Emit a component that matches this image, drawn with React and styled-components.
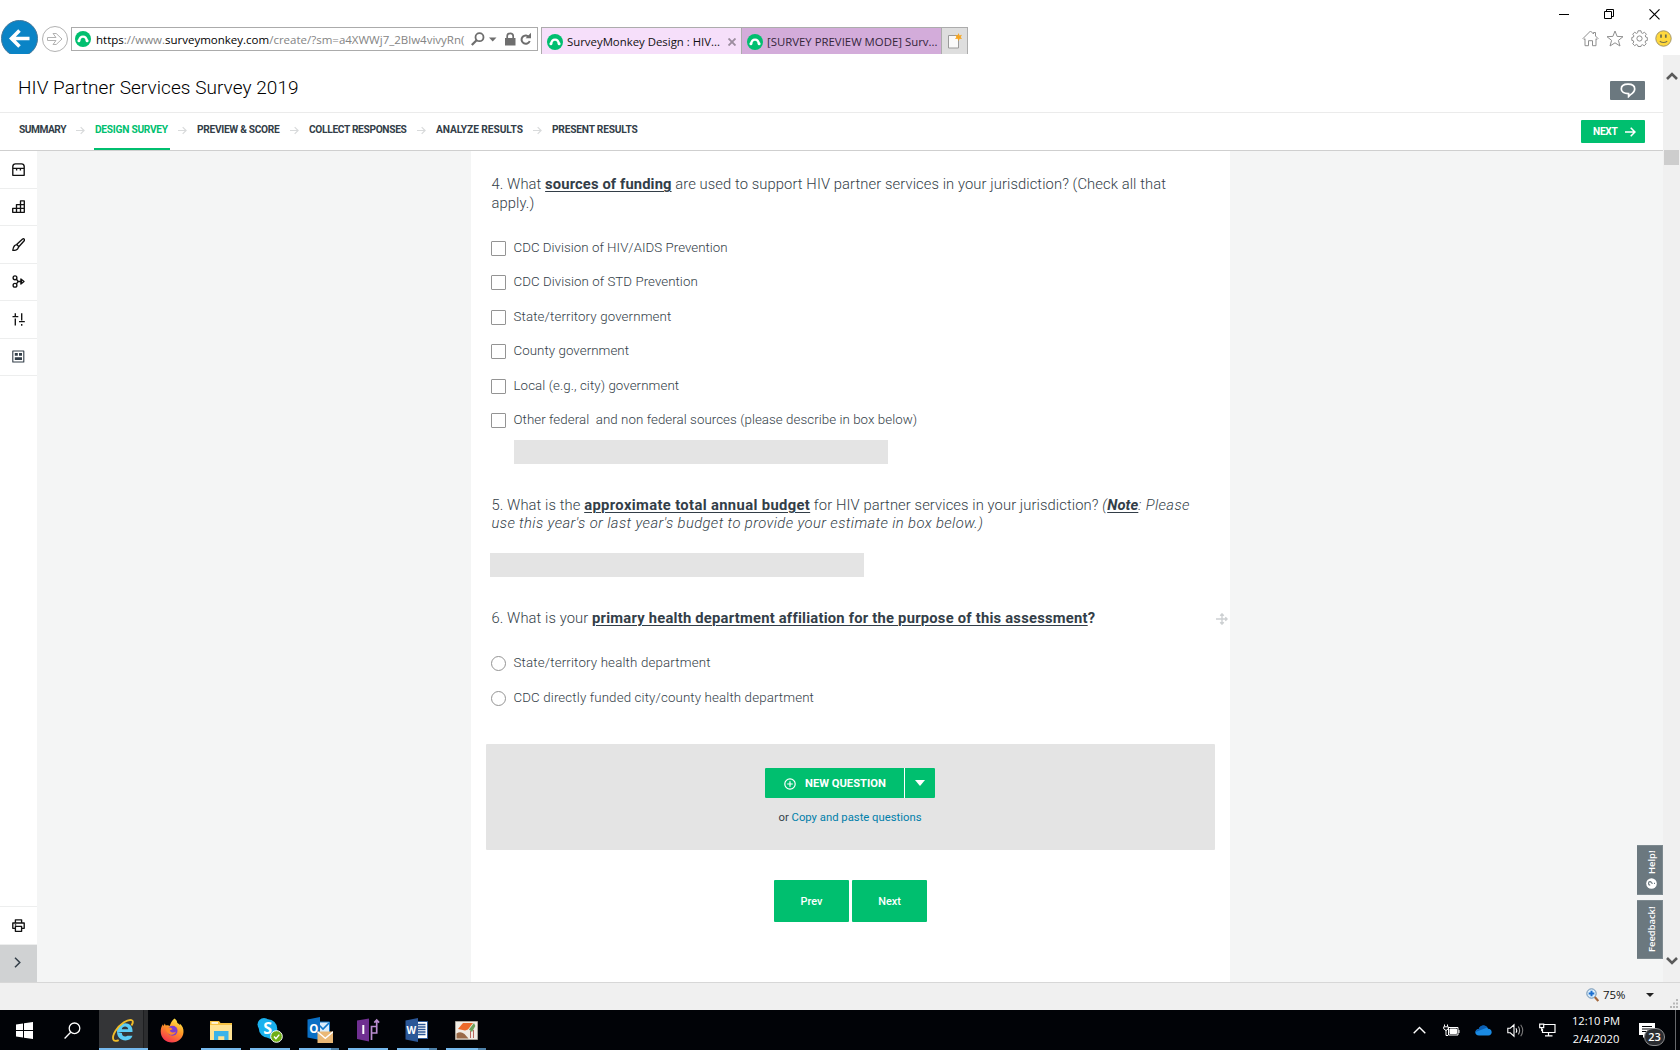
import React from "react";
import styled, { createGlobalStyle, css } from "styled-components";

const ui = `"Open Sans", "Noto Sans", sans-serif`;
const brand = `Roboto, "Liberation Sans", sans-serif`;
const green = "#00bf6f";
const ink = "#333e48";
const slate = "#6b787f";

const Global = createGlobalStyle`
  *, *::before, *::after { box-sizing: border-box; }
  html, body { margin: 0; padding: 0; }
  body { width: 1680px; height: 1050px; overflow: hidden; background: #fff; }
  svg { display: block; flex: none; }
`;

const Screen = styled.div`
  width: 1680px;
  height: 1050px;
  display: flex;
  flex-direction: column;
  background: #fff;
  overflow: hidden;
  font-family: ${brand};
`;

/* ---------- browser chrome ---------- */

const TitleBar = styled.div`
  height: 20px;
  display: flex;
  justify-content: flex-end;
  align-items: flex-end;
  gap: 34px;
  padding: 0 20px 0 0;
`;

const BrowserBar = styled.div`
  height: 34px;
  display: flex;
  align-items: flex-start;
  padding-left: 1px;
  font-family: ${ui};
  overflow: hidden;
`;

const BackButton = styled.div`
  width: 37px;
  height: 37px;
  border-radius: 50%;
  background: #0a84c6;
  border: 1px solid #47799a;
  display: grid;
  place-items: center;
  flex: none;
`;

const ForwardButton = styled.div`
  width: 26px;
  height: 26px;
  margin: 6px 0 0 4px;
  border: 1px solid #b2b2b2;
  border-radius: 50%;
  display: grid;
  place-items: center;
  flex: none;
`;

const AddressBar = styled.div`
  width: 467px;
  height: 24px;
  margin: 7px 0 0 3px;
  padding: 0 5px 0 3px;
  border: 1px solid #ababab;
  display: flex;
  align-items: center;
  flex: none;
`;

const Url = styled.div`
  width: 372px;
  flex: none;
  margin: 0 3px 0 5px;
  font-size: 11.5px;
  line-height: 20px;
  padding-top: 1px;
  white-space: nowrap;
  color: #848484;
  b { font-weight: 400; color: #000; }
`;

const TabStrip = styled.div`
  display: flex;
  margin: 7px 0 0 3px;
  height: 27px;
  border: 1px solid #acacac;
  border-bottom: 0;
`;

const Tab = styled.div`
  width: 200px;
  display: flex;
  align-items: center;
  gap: 4px;
  padding: 1px 0 0 5px;
  font-size: 11.38px;
  white-space: nowrap;
  border-right: 1px solid #acacac;
  background: ${(p) => (p.$active ? "#f6dffa" : "#d3acda")};
  color: ${(p) => (p.$active ? "#111" : "#33263a")};
`;

const TabTitle = styled.span`
  width: ${(p) => p.$w}px;
`;

const NewTab = styled.div`
  width: 25px;
  display: grid;
  place-items: center;
  background: #dedede;
`;

const BrowserTools = styled.div`
  margin-left: auto;
  margin-top: 10px;
  padding-right: 8px;
  display: flex;
  gap: 7px;
`;

/* ---------- page ---------- */

const Viewport = styled.div`
  height: 928px;
  display: flex;
`;

const Page = styled.div`
  position: relative;
  width: 1663px;
  display: flex;
  flex-direction: column;
`;

const ScrollBar = styled.div`
  width: 17px;
  margin-top: 1px;
  background: #f0f0f0;
  display: flex;
  flex-direction: column;
  align-items: center;
  padding: 16px 0 16px;
`;

const Thumb = styled.div`
  width: 15px;
  height: 15px;
  margin: 69px 0 auto;
  background: #cdcdcd;
`;

const SurveyHeader = styled.header`
  height: 59px;
  padding: 0 18px;
  border-bottom: 1px solid #ebebeb;
  display: flex;
  align-items: flex-start;
  justify-content: space-between;
`;

const SurveyTitle = styled.h1`
  margin: 22px 0 0;
  font-size: 19px;
  line-height: 24px;
  font-weight: 300;
  letter-spacing: 0.06px;
  color: #000;
`;

const CommentButton = styled.div`
  width: 35px;
  height: 19px;
  margin-top: 27px;
  border-radius: 1px;
  background: ${slate};
  display: grid;
  place-items: center;
`;

const Steps = styled.nav`
  height: 38px;
  padding: 0 18px 0 19px;
  border-bottom: 1px solid #cfcfcf;
  display: flex;
  align-items: stretch;
`;

const Step = styled.div`
  position: relative;
  width: ${(p) => p.$w}px;
  padding-top: 8px;
  font-size: 10.2px;
  line-height: 17px;
  font-weight: 700;
  white-space: nowrap;
  letter-spacing: ${(p) => p.$track}px;
  color: ${ink};
  ${(p) => p.$active && css`
    color: ${green};
    &::after {
      content: "";
      position: absolute;
      left: -1px;
      right: -2px;
      bottom: 0;
      height: 2px;
      background: ${green};
    }
  `}
`;

const StepArrow = styled.div`
  width: 9px;
  margin: 13px 10px 0;
`;

const NextStep = styled.div`
  width: 64px;
  height: 23px;
  margin: 7px 0 0 auto;
  padding: 0 9px 0 12px;
  border-radius: 1px;
  background: ${green};
  color: #fff;
  display: flex;
  align-items: center;
  justify-content: space-between;
  font-size: 10.2px;
  font-weight: 700;
  letter-spacing: -0.3px;
`;

const Workspace = styled.div`
  flex: 1;
  display: flex;
  background: #f4f5f5;
  overflow: hidden;
`;

const Sidebar = styled.aside`
  width: 37px;
  background: #fff;
  display: flex;
  flex-direction: column;
`;

const SideItem = styled.div`
  height: 37.5px;
  border-bottom: 1px solid #edeeee;
  display: grid;
  place-items: center;
  color: #111;
`;

const SideBottom = styled.div`
  margin-top: auto;
  border-top: 1px solid #edeeee;
`;

const Expand = styled.div`
  width: 37px;
  height: 37.5px;
  background: #d0d2d3;
  display: grid;
  place-items: center;
  padding: 0 2px 2px 0;
`;

const Paper = styled.main`
  width: 759px;
  margin-left: 434px;
  background: #fff;
  padding: 24px 15px 0;
  color: ${ink};
`;

const Question = styled.section`
  padding: 0 5px;
  margin-bottom: ${(p) => p.$after}px;
`;

const Prompt = styled.div`
  font-size: 14.75px;
  line-height: ${(p) => p.$line || 19}px;
  font-weight: 350;
  letter-spacing: 0.09px;
  padding-left: 0.5px;
  white-space: nowrap;
  margin-bottom: ${(p) => p.$after}px;
  display: flex;
  justify-content: space-between;
`;

const Note = styled.em`
  letter-spacing: 0.39px;
`;

const DragHandle = styled.span`
  margin: 4px -18px 0 0;
`;

const Strong = styled.strong`
  font-weight: 700;
  letter-spacing: ${(p) => p.$track}px;
  text-decoration: ${(p) => (p.$plain ? "none" : "underline")};
  text-decoration-thickness: 1px;
  text-underline-offset: 2px;
`;

const Option = styled.label`
  height: ${(p) => p.$h || 34.5}px;
  display: flex;
  align-items: center;
  gap: 7.5px;
`;

const Mark = styled.span`
  width: 15px;
  height: 15px;
  border: 1px solid #949494;
  border-radius: ${(p) => (p.$round ? "50%" : "1px")};
  background: #fff;
`;

const OptionText = styled.span`
  font-size: 13.3px;
  line-height: 17px;
  font-weight: 350;
  letter-spacing: ${(p) => p.$track}px;
  white-space: pre;
  padding-bottom: 2px;
`;

const AnswerBox = styled.div`
  width: 374px;
  height: 24px;
  margin: 2px 0 0 ${(p) => p.$left}px;
  background: #e4e4e4;
`;

const AddPanel = styled.div`
  height: 105.5px;
  margin-bottom: 30.5px;
  padding: 24px 1px 0 0;
  border-radius: 1px;
  background: #e4e4e4;
  display: flex;
  flex-direction: column;
  align-items: center;
  font-size: 11.3px;
  line-height: 14px;
`;

const SplitButton = styled.div`
  display: flex;
  gap: 1px;
  height: 30px;
  margin-bottom: 13px;
  border-radius: 1px;
  background: #fff;
  overflow: hidden;
`;

const NewQuestion = styled.div`
  width: 139px;
  padding: 1px 0 0 19px;
  background: ${green};
  color: #fff;
  display: flex;
  align-items: center;
  gap: 9px;
  font-size: 11.2px;
  font-weight: 700;
  white-space: nowrap;
`;

const MoreTypes = styled.div`
  width: 30px;
  background: ${green};
  display: grid;
  place-items: center;
`;

const PasteLink = styled.a`
  color: #007faa;
`;

const Pager = styled.div`
  display: flex;
  justify-content: center;
  gap: 3px;
`;

const PageButton = styled.div`
  width: 75px;
  height: 42px;
  border-radius: 1px;
  background: ${green};
  color: #fff;
  display: grid;
  place-items: center;
  font-size: 10.9px;
  font-weight: 500;
`;

const SideTabs = styled.div`
  position: absolute;
  right: 0;
  top: 791px;
  display: flex;
  flex-direction: column;
  gap: 5px;
`;

const SideTab = styled.div`
  width: 26px;
  height: ${(p) => p.$h}px;
  background: ${slate};
  border: 1px solid #7d898f;
  border-right: 0;
  color: #fff;
  display: flex;
  align-items: center;
  justify-content: center;
  gap: 4px;
  writing-mode: vertical-rl;
  transform: rotate(180deg);
  font-family: ${ui};
  font-size: 9.4px;
  font-weight: 600;
  padding-right: 4px;
  line-height: 14px;
`;

/* ---------- status bar and taskbar ---------- */

const StatusBar = styled.div`
  height: 28px;
  padding-bottom: 4px;
  background: #f0f0f0;
  border-top: 1px solid #d7d7d7;
  display: flex;
  justify-content: flex-end;
  align-items: center;
  font-family: ${ui};
  font-size: 11.4px;
  color: #111;
`;

const Zoom = styled.span`
  width: 43px;
  margin: -1px 0 0 4px;
`;

const Grip = styled.span`
  margin-bottom: -4px;
`;

const Taskbar = styled.div`
  height: 40px;
  background: #010307;
  display: flex;
  align-items: stretch;
`;

const TaskItem = styled.div`
  width: ${(p) => p.$w || 49}px;
  padding: ${(p) => p.$pad || "0"};
  display: flex;
  align-items: center;
  justify-content: center;
`;

const AppButton = styled.div`
  position: relative;
  width: 49px;
  padding-left: ${(p) => p.$nudge || 0}px;
  padding-right: 1px;
  display: flex;
  align-items: center;
  justify-content: center;
  background: ${(p) => (p.$active ? "linear-gradient(90deg, #343537 44px, #1d1e20 44px, #1d1e20 45px, #2c2d2f 45px)" : "transparent")};
  &::after {
    content: "";
    position: absolute;
    left: ${(p) => (p.$active ? 0 : 4)}px;
    right: ${(p) => (p.$active ? 0 : 5)}px;
    bottom: 0;
    height: ${(p) => (p.$open ? 2 : 0)}px;
    background: ${(p) => (p.$multi ? "linear-gradient(90deg, #76b9ed calc(100% - 8px), #4f82a9 calc(100% - 8px))" : "#76b9ed")};
  }
`;

const Tray = styled.div`
  margin-left: auto;
  display: flex;
  align-items: center;
  color: #fff;
`;

const TrayIcon = styled.div`
  width: 32px;
  display: grid;
  place-items: center;
`;

const Clock = styled.div`
  width: 66px;
  text-align: center;
  font-family: ${ui};
  font-size: 11.2px;
  line-height: 18px;
  padding-bottom: 1px;
`;

const ActionCenter = styled.div`
  position: relative;
  width: 46px;
  height: 40px;
  padding: 13px 0 0 10px;
`;

const Badge = styled.div`
  position: absolute;
  left: 15px;
  top: 18px;
  width: 21px;
  height: 18px;
  border-radius: 9px;
  border: 1px solid #8b8c8e;
  background: #2b2d31;
  color: #fff;
  font: 600 11px/16px ${ui};
  text-align: center;
`;

const ShowDesktop = styled.div`
  width: 5px;
  height: 40px;
  border-left: 1px solid #66686b;
`;

/* ---------- drawings ---------- */

const Monkey = () => (
  <svg width="16" height="16" viewBox="0 0 16 16">
    <circle cx="8" cy="8" r="8" fill="#00bf6f" />
    <path d="M4.200 9.600C4.600 6.900 5.900 5.700 8 5.700s3.400 1.200 3.800 3.900" fill="none" stroke="#fff" strokeWidth="2.300" />
    <circle cx="3.900" cy="9.800" r="1.500" fill="#fff" />
    <circle cx="12.100" cy="9.800" r="1.500" fill="#fff" />
  </svg>
);

const ThinArrow = ({ w = 9, h = 9, color = "#d8dadb", sw = 1.3 }) => (
  <svg width={w} height={h} viewBox="0 0 10 9" fill="none" stroke={color} strokeWidth={sw}>
    <path d="M0 4.5h9M5.2.7 9 4.5 5.2 8.3" />
  </svg>
);

const Chevron = ({ down }) => (
  <svg width="12" height="10" viewBox="0 0 12 10" fill="none" stroke="#5a5a5a" strokeWidth="2.6">
    <path d={down ? "M1 2l5 5 5-5" : "M1 8l5-5 5 5"} />
  </svg>
);

const Caret = ({ w, h, color }) => (
  <svg width={w} height={h} viewBox="0 0 10 6" preserveAspectRatio="none"><path d="M0 0h10L5 6z" fill={color} /></svg>
);

const SideIcon = ({ name }) => {
  const art = {
    bank: <path d="M.8 12.3V3.4Q1 .8 3.4.8h6.2q2.4 0 2.6 2.6v8.9zM.8 5.3h11.4M4.6 5.5v2M8.4 5.5v2" />,
    blocks: <path d="M.7 12.3V8.4h3.8V4.6h4V.8h3.8v11.5zM4.5 12.3V8.4h7.8M8.5 12.3V4.6h3.8" />,
    brush: <path d="M4.6 6.6 10.6 1q1-.6 1.6.2.6.8 0 1.6L6.8 8.8M4.8 6.6 6.9 8.7 5.6 10.9Q3.6 12.8.8 12.3q.2-2.8 1.7-4.6.9-1 2.3-1.1z" />,
    logic: <><circle cx="3" cy="2.8" r="1.9" /><circle cx="3" cy="10.2" r="1.9" /><path d="M4.4 4.3 6.2 6.5 4.4 8.8M6 6.5h4M8.9 3.9 12 6.5 8.9 9.1z" /></>,
    options: <path d="M3.3.3v3.2M.5 3.6h5.8M3.3 5.6v7M9.7.3v7.2M7 8.600h5.8M9.7 11v1.8" />,
    format: <><rect x=".8" y="1" width="11" height="11" strokeWidth="1.100" /><path d="M2.800 3h3v2.700h-3zM7 3h3v2.700H7zM2.800 7.300H10V10H2.800z" fill="#333e48" stroke="none" /></>,
    print: <path d="M3.4 4V.8h6.2V4M3.2 9.3H.8V4h11.4v5.3H9.8M3.4 7.4h6.2v4.9H3.4zM2.8 5.8h1.4" />,
  };
  return (
    <svg width="13" height="13" viewBox="0 0 13 13" fill="none" stroke={name === "format" ? "#333e48" : "#111"} strokeWidth="1.35" strokeLinejoin="round">
      {art[name]}
    </svg>
  );
};

const WindowControls = () => (
  <>
    <svg width="11" height="12" viewBox="0 0 11 12"><path d="M0 6.5h10" stroke="#000" /></svg>
    <svg width="11" height="12" viewBox="0 0 11 12" fill="none" stroke="#000"><path d="M.5 3.5h7v7h-7zM2.5 3.5v-2h7v7h-2" /></svg>
    <svg width="11" height="12" viewBox="0 0 11 12" fill="none" stroke="#000" strokeWidth="1.2"><path d="M.5 1.3l10 10M10.5 1.3l-10 10" /></svg>
  </>
);

const HomeIcon = () => (
  <svg width="17" height="17" viewBox="0 0 17 17" fill="none" stroke="#8f8f8f">
    <path d="M1 8.5 8.5 1l3 3V2.5h2V6l2.5 2.5-1 1-1-.8v7h-3.500v-5h-4v5H3v-7l-1 .8z" />
  </svg>
);
const StarIcon = () => (
  <svg width="18" height="17" viewBox="0 0 18 17" fill="none" stroke="#8f8f8f">
    <path d="M9 1l2.100 5.400 5.900.3-4.600 3.700 1.600 5.600L9 12.800 4 16l1.600-5.600L1 6.700l5.900-.3z" />
  </svg>
);
const GearIcon = () => (
  <svg width="17" height="17" viewBox="0 0 17 17" fill="none" stroke="#8f8f8f" strokeLinejoin="round">
    <path d="M7 .8h3l.4 2 1.300.6 1.700-1.200 2 2-1.200 1.700.6 1.200 1.500.4v3l-1.700.3-.5 1.300 1.100 1.700-2 2-1.600-1.100-1.300.5-.3 1.300H7l-.4-1.500-1.300-.5-1.600 1.200-2-2 1.100-1.700-.5-1.300-1.500-.3v-2.900l1.600-.4.500-1.200-1.200-1.700 2-2 1.700 1.200 1.200-.6z" />
    <circle cx="8.5" cy="8.5" r="2.6" />
  </svg>
);
const SmileIcon = () => (
  <svg width="17" height="17" viewBox="0 0 17 17">
    <circle cx="8.5" cy="8.5" r="7.7" fill="#ffd83d" stroke="#a59768" />
    <path d="M6 4.5v3.2M10.8 4.5v3.2" stroke="#6b6b4a" strokeWidth="1.7" />
    <path d="M4.8 11.2q3.7 2.6 7.4 0" fill="none" stroke="#75704a" strokeWidth="1.2" />
  </svg>
);

const PlusCircle = () => (
  <svg width="12" height="12" viewBox="0 0 12 12" fill="none" stroke="#fff" strokeWidth="1.2">
    <circle cx="6" cy="6" r="5.2" /><path d="M6 3.2v5.6M3.2 6h5.6" />
  </svg>
);

const MoveIcon = () => (
  <svg width="12" height="12" viewBox="0 0 12 12" fill="none" stroke="#cdd0d2" strokeWidth="1.4">
    <path d="M0 6h11M6 1v10M4.200 2.700 6 .9l1.800 1.800M4.200 9.300 6 11.100l1.800-1.800M9.300 4.200 11.100 6 9.300 7.800" />
  </svg>
);

const WindowsLogo = () => (
  <svg width="17" height="17" viewBox="0 0 17 17" fill="#fff">
    <path d="M0 2.4 7 1.4V8H0zM8 1.2 17 0v8H8zM0 9h7v6.6l-7-1zM8 9h9v8L8 15.8z" />
  </svg>
);
const SearchGlass = () => (
  <svg width="17" height="17" viewBox="0 0 17 17" fill="none" stroke="#fff" strokeWidth="1.3">
    <circle cx="10.5" cy="6.3" r="5.3" /><path d="M6.7 10.2.6 16.5" />
  </svg>
);
const ExplorerE = () => (
  <svg width="25" height="25" viewBox="0 0 25 25" fill="none">
    <path d="M6.2 14h15.300c.5-5.500-3-8.800-7.200-8.800-5 0-8.300 3.800-8.300 8.600 0 5 3.500 8.600 8.600 8.600 3.400 0 5.900-1.700 6.900-4.600h-5c-2.300 1.900-5.700.3-5.600-2.800" fill="#5ccdf5" />
    <path d="M10.8 11.200c.3-3.400 6.200-3.500 6.400 0z" fill="#333538" />
    <path d="M20.500 7.500C24.500 1.200 19 .5 13 4.300 6 8.800.8 17.500 2.300 21.500c.7 1.900 3.300 1.600 5.400.6" stroke="#f0bc28" strokeWidth="1.9" />
  </svg>
);
const Firefox = () => (
  <svg width="24" height="25" viewBox="0 0 24 25">
    <defs>
      <linearGradient id="fox" x1="0.8" y1="0" x2="0.3" y2="1">
        <stop offset="0" stopColor="#fff04c" /><stop offset=".45" stopColor="#ff9a27" /><stop offset="1" stopColor="#f5304f" />
      </linearGradient>
    </defs>
    <path d="M14.5.5c1.800 1 2.700 3 2.800 4.500 1.300.5 2 1.200 2.700 2.300 0-.7-.1-1.300-.3-1.900 3 2.500 4 5.300 3.800 8.600C23.200 20 18.200 24.500 12 24.500S.7 20 .7 13.500c0-3 .8-5.600 2.300-7.300l.4 2 1.400-2.800.9 2.200c1.500-.6 3-.5 4 .3C10.800 5 12 2.500 14.5.5z" fill="url(#fox)" />
    <circle cx="12.5" cy="12.7" r="5" fill="#7b3fd0" />
    <path d="M5.500 10.500c2.500-2 5.500-1.300 7 .7l-2.700 1.200c1 2.300 4.200 2.600 6.200 1.100-1.200 4.500-8.500 5-10.500-3z" fill="#ff8a2a" />
  </svg>
);
const Folder = () => (
  <svg width="23" height="21" viewBox="0 0 23 21">
    <path d="M0 1h9l1.500 2H22v17H0z" fill="#f6c244" /><path d="M1.500 2.200H8v1.500H1.500z" fill="#fff" />
    <path d="M0 5h22v15H0z" fill="#ffe394" />
    <path d="M4 20v-9h14.500v9h-4.200v-3.800H8.200V20z" fill="#3bb3e9" />
  </svg>
);
const AppText = styled.text`
  font-family: ${ui};
  font-weight: 700;
`;
const Skype = () => (
  <svg width="26" height="26" viewBox="0 0 26 26">
    <circle cx="7" cy="7.5" r="6.5" fill="#1ab1ee" /><circle cx="14.5" cy="15.5" r="6.5" fill="#1ab1ee" /><circle cx="11" cy="11.5" r="9.2" fill="#1ab1ee" />
    <AppText x="6.2" y="17.3" fontSize="16" fill="#fff">S</AppText>
    <circle cx="19.5" cy="19.5" r="5.800" fill="#6fae17" stroke="#fff" />
    <path d="M17 19.600l1.900 2 3.400-4" fill="none" stroke="#fff" strokeWidth="1.4" />
  </svg>
);
const Outlook = () => (
  <svg width="26" height="26" viewBox="0 0 26 26">
    <path d="M12 5h10.500v13H12z" fill="#d9ecfb" stroke="#1077c9" /><path d="M12.500 8.500l3.500 3.500 6-6" fill="none" stroke="#1077c9" strokeWidth="1.6" />
    <path d="M.5 2.500 13 0v23L.5 20.500z" fill="#0a6fc4" />
    <AppText x="2.3" y="16" fontSize="11.5" fill="#fff">O</AppText>
    <path d="M10.500 14.500H26V26H10.500z" fill="#eab876" /><path d="M10.500 14.800l7.800 6.500 7.700-6.500" fill="none" stroke="#fff" strokeWidth="1.3" />
  </svg>
);
const Interchange = () => (
  <svg width="24" height="24" viewBox="0 0 24 24">
    <path d="M0 2.500 12 .5v23L0 21z" fill="#6f2f91" />
    <path d="M6.300 7v9" stroke="#fff" strokeWidth="2" />
    <path d="M14.500 22V8.500h5.200V15h-4.800M19.700 15V2.500M17.300 4.600l2.400-2.600 2.400 2.600" fill="none" stroke="#b98ccf" strokeWidth="1.7" />
  </svg>
);
const Word = () => (
  <svg width="24" height="24" viewBox="0 0 24 24">
    <path d="M11 3.500h11.500v17H11z" fill="#fff" stroke="#2b5797" /><path d="M13 6.500h7.500M13 9h7.500M13 11.500h7.500M13 14h7.500M13 16.500h7.500" stroke="#2b5797" strokeWidth="1.3" />
    <path d="M.5 2.500 13 0v24L.5 21.500z" fill="#2b5797" />
    <AppText x="1.500" y="15.8" fontSize="10" fill="#fff">W</AppText>
  </svg>
);
const Photo = () => (
  <svg width="23" height="19" viewBox="0 0 23 19">
    <path d="M.5.5h22v18H.5z" fill="#f1ece4" stroke="#aaa49a" />
    <path d="M3 8 8 2h10l-5 6.500-3 1z" fill="#ec6a2b" /><path d="M14 8.500 19 2l1.300 3-3.300 6z" fill="#6aa05a" />
    <path d="M1.500 12.500q4-2.500 8 .5l4 4.500h-12z" fill="#9a6a47" /><path d="M15.500 10v7M18.500 9v8" stroke="#b9695c" />
  </svg>
);

const steps = [
  ["SUMMARY", 47, -0.48],
  ["DESIGN SURVEY", 73, -0.27, true],
  ["PREVIEW & SCORE", 83, -0.31],
  ["COLLECT RESPONSES", 98, -0.33],
  ["ANALYZE RESULTS", 87, -0.07],
  ["PRESENT RESULTS", 86, -0.2],
];

const funding = [
  ["CDC Division of HIV/AIDS Prevention", 0.03],
  ["CDC Division of STD Prevention", 0.05],
  ["State/territory government", 0.13],
  ["County government", 0.06],
  ["Local (e.g., city) government", 0.08],
  ["Other federal  and non federal sources (please describe in box below)", 0.06],
];

const apps = [
  [ExplorerE, { $active: true, $open: true }],
  [Firefox, {}],
  [Folder, { $open: true }],
  [Skype, { $open: true }],
  [Outlook, { $open: true, $multi: true, $nudge: 2 }],
  [Interchange, { $open: true, $nudge: 2 }],
  [Word, { $open: true, $multi: true }],
  [Photo, { $open: true, $multi: true }],
];

export default function App() {
  return (
    <Screen>
      <Global />
      <TitleBar><WindowControls /></TitleBar>
      <BrowserBar>
        <BackButton>
          <svg width="21" height="19" viewBox="0 0 21 19" fill="none" stroke="#fff" strokeWidth="3.6"><path d="M20.500 9.500H3M10.500 1.500l-8 8 8 8" /></svg>
        </BackButton>
        <ForwardButton>
          <svg width="16" height="14" viewBox="0 0 16 14" fill="none" stroke="#b2b2b2"><path d="M.5 5.500h8.500L6 1.500h3.200L15 7l-5.800 5.500H6l3-4H.5z" /></svg>
        </ForwardButton>
        <AddressBar>
          <Monkey />
          <Url><b>https</b>://www.<b>surveymonkey.com</b>/create/?sm=a4XWWj7_2Blw4vivyRn(</Url>
          <svg width="14" height="14" viewBox="0 0 14 14" fill="none" stroke="#6e6e6e" strokeWidth="1.8"><circle cx="8.5" cy="5.2" r="4" /><path d="M5.600 8.200.8 13" strokeWidth="2.3" /></svg>
          <svg width="47" height="14" viewBox="0 0 47 14" fill="none">
            <path d="M4 5.500h7.500L7.700 9.500z" fill="#6e6e6e" />
            <path d="M20 6h10.500v7.500H20z" fill="#6e6e6e" /><path d="M22.200 6V4q0-2.700 3-2.700t3 2.700v2" stroke="#6e6e6e" strokeWidth="1.7" />
            <path d="M44.200 5.200a4.200 4.200 0 1 0 .5 3.800" stroke="#6e6e6e" strokeWidth="2" /><path d="M46 .8v5.400h-5.400z" fill="#6e6e6e" />
          </svg>
        </AddressBar>
        <TabStrip>
          <Tab $active>
            <Monkey />
            <TabTitle $w={157}>SurveyMonkey Design : HIV...</TabTitle>
            <svg width="8" height="8" viewBox="0 0 8 8" stroke="#9c8d9f" strokeWidth="1.9"><path d="M.5.5l7 7M7.5.5l-7 7" /></svg>
          </Tab>
          <Tab>
            <Monkey />
            <TabTitle $w={172}>[SURVEY PREVIEW MODE] Surv...</TabTitle>
          </Tab>
          <NewTab>
            <svg width="14" height="16" viewBox="0 0 14 16"><path d="M.5 2.500h10v12.500H.5z" fill="#fafafa" stroke="#9a9a9a" /><path d="M10.500 0l1 2.400 2.500-.6-1.300 2.200L14 6l-2.400-.3-1 2.300-1-2.300L7 6l1.400-2L7 1.800l2.500.6z" fill="#f5a623" /></svg>
          </NewTab>
        </TabStrip>
        <BrowserTools><HomeIcon /><StarIcon /><GearIcon /><SmileIcon /></BrowserTools>
      </BrowserBar>

      <Viewport>
        <Page>
          <SurveyHeader>
            <SurveyTitle>HIV Partner Services Survey 2019</SurveyTitle>
            <CommentButton>
              <svg width="16" height="15" viewBox="0 0 16 15" fill="none" stroke="#fff" strokeWidth="1.7"><path d="M8 1.200c4 0 6.700 1.700 6.700 4.700 0 2.500-1.800 4.200-4.500 6L8.600 13.500v-2.900C4 10.700 1.300 8.800 1.300 5.900 1.300 2.900 4 1.200 8 1.200z" /></svg>
            </CommentButton>
          </SurveyHeader>
          <Steps>
            {steps.map(([name, w, track, active], i) => (
              <React.Fragment key={name}>
                {i > 0 && <StepArrow><ThinArrow /></StepArrow>}
                <Step $w={w} $track={track} $active={active}>{name}</Step>
              </React.Fragment>
            ))}
            <NextStep>NEXT<ThinArrow w={11} h={10} color="#fff" sw={1.4} /></NextStep>
          </Steps>
          <Workspace>
            <Sidebar>
              {["bank", "blocks", "brush", "logic", "options", "format"].map((n) => <SideItem key={n}><SideIcon name={n} /></SideItem>)}
              <SideBottom>
                <SideItem><SideIcon name="print" /></SideItem>
                <Expand>
                  <svg width="7" height="11" viewBox="0 0 7 11" fill="none" stroke={ink} strokeWidth="1.5"><path d="M1 .7l4.800 4.800L1 10.300" /></svg>
                </Expand>
              </SideBottom>
            </Sidebar>
            <Paper>
              <Question $after={32}>
                <Prompt $after={18}>
                  <span>4. What <Strong $track={0.12}>sources of funding</Strong> are used to support HIV partner services in your jurisdiction? (Check all that<br />apply.)</span>
                </Prompt>
                {funding.map(([text, track]) => (
                  <Option key={text}><Mark /><OptionText $track={track}>{text}</OptionText></Option>
                ))}
                <AnswerBox $left={23} />
              </Question>
              <Question $after={32}>
                <Prompt $line={18} $after={21}>
                  <span>5. What is the <Strong $track={0.37}>approximate total annual budget</Strong> for HIV partner services in your jurisdiction? <Note>(<Strong $track={0.1}>Note</Strong>: Please<br />use this year's or last year's budget to provide your estimate in box below.)</Note></span>
                </Prompt>
                <AnswerBox $left={-1} />
              </Question>
              <Question $after={28}>
                <Prompt $after={18}>
                  <span>6. What is your <Strong $track={0.23}>primary health department affiliation for the purpose of this assessment</Strong><Strong $plain $track={0}>?</Strong></span>
                  <DragHandle><MoveIcon /></DragHandle>
                </Prompt>
                <Option $h={35}><Mark $round /><OptionText $track={0.16}>State/territory health department</OptionText></Option>
                <Option $h={35}><Mark $round /><OptionText $track={0.13}>CDC directly funded city/county health department</OptionText></Option>
              </Question>
              <AddPanel>
                <SplitButton>
                  <NewQuestion><PlusCircle />NEW QUESTION</NewQuestion>
                  <MoreTypes><Caret w={10} h={6} color="#fff" /></MoreTypes>
                </SplitButton>
                <div>or <PasteLink>Copy and paste questions</PasteLink></div>
              </AddPanel>
              <Pager><PageButton>Prev</PageButton><PageButton>Next</PageButton></Pager>
            </Paper>
          </Workspace>
          <SideTabs>
            <SideTab $h={50}>
              <svg width="11" height="11" viewBox="0 0 11 11"><circle cx="5.5" cy="5.5" r="5.3" fill="#fff" /><path d="M3.8 4.200q.1-1.700 1.800-1.700t1.700 1.500q0 .9-1 1.500-.7.4-.7 1.200M5.600 8v1" stroke={slate} strokeWidth="1.2" fill="none" transform="rotate(90 5.5 5.5)" /></svg>
              Help!
            </SideTab>
            <SideTab $h={59}>Feedback!</SideTab>
          </SideTabs>
        </Page>
        <ScrollBar><Chevron /><Thumb /><Chevron down /></ScrollBar>
      </Viewport>

      <StatusBar>
        <svg width="13" height="14" viewBox="0 0 13 14"><circle cx="5.5" cy="5.5" r="4.7" fill="#d9ecfa" stroke="#6b8fb0" /><path d="M5.5 2.700v5.600M2.700 5.500h5.600" stroke="#1c6fd0" strokeWidth="2" /><path d="M8.800 9l3.500 4" stroke="#a5683c" strokeWidth="2.2" /></svg>
        <Zoom>75%</Zoom>
        <Caret w={8} h={4} color="#222" />
        <Grip>
          <svg width="26" height="27" viewBox="0 0 26 27" fill="#b9b9b9"><path d="M22 16h2v2h-2zM19 19.500h2v2h-2zM22 19.500h2v2h-2zM16 23h2v2h-2zM19 23h2v2h-2zM22 23h2v2h-2z" /></svg>
        </Grip>
      </StatusBar>

      <Taskbar>
        <TaskItem $w={48}><WindowsLogo /></TaskItem>
        <TaskItem $w={51} $pad="0 3px 0 0"><SearchGlass /></TaskItem>
        {apps.map(([Icon, flags], i) => <AppButton key={i} {...flags}><Icon /></AppButton>)}
        <Tray>
          <TrayIcon><svg width="13" height="8" viewBox="0 0 13 8" fill="none" stroke="#fff" strokeWidth="1.4"><path d="M.7 7.200l5.800-5.800 5.800 5.800" /></svg></TrayIcon>
          <TrayIcon><svg width="17" height="13" viewBox="0 0 17 13" fill="none" stroke="#fff"><path d="M5.500 3.500h9.500v7.500H5.500z" /><path d="M7 5h6.500v4.500H7z" fill="#fff" /><path d="M16 6v3M1.500.5v2M4.500.5v2M.7 2.800h4.600v2L3 6.500.7 4.800zM3 6v5.500h2" /></svg></TrayIcon>
          <TrayIcon><svg width="17" height="11" viewBox="0 0 17 11"><path d="M4 10.500Q.3 10.300.3 7.300.5 4.300 3.700 4 5 .5 8.500.5q3.500.2 4.600 3.300 3.400.3 3.600 3.400-.2 3-3.300 3.300z" fill="#1a8ae2" /><path d="M.5 7Q1 4.300 3.700 4 5 .5 8.500.5q2.500.2 3.800 2z" fill="#0b5fb4" /></svg></TrayIcon>
          <TrayIcon><svg width="17" height="15" viewBox="0 0 17 15" fill="none" stroke="#fff" strokeWidth="1.1"><path d="M.8 5.200h2.500L7 1.800v11.400L3.300 9.800H.8zM9 5.200q1.500 2.300 0 4.600" /><path d="M11.300 3.500q2.600 4 0 8" stroke="#aaa" /><path d="M13.700 1.800q4 5.700 0 11.400" stroke="#777" /></svg></TrayIcon>
          <TrayIcon><svg width="17" height="14" viewBox="0 0 17 14" fill="none" stroke="#fff" strokeWidth="1.2"><path d="M5 1.500h11v8H3.500V6M9.500 9.500v3M6 12.800h7.500M.7 1.200h4v3.400h-4zM2.700 4.600V8" /></svg></TrayIcon>
          <Clock>12:10 PM<br />2/4/2020</Clock>
          <ActionCenter>
            <svg width="17" height="15" viewBox="0 0 17 15"><path d="M0 0h16v12h-9l-3 3v-3H0z" fill="#fff" /><path d="M3 3.500h10M3 6h10M3 8.500h6" stroke="#010307" strokeWidth="1.1" /></svg>
            <Badge>23</Badge>
          </ActionCenter>
          <ShowDesktop />
        </Tray>
      </Taskbar>
    </Screen>
  );
}
